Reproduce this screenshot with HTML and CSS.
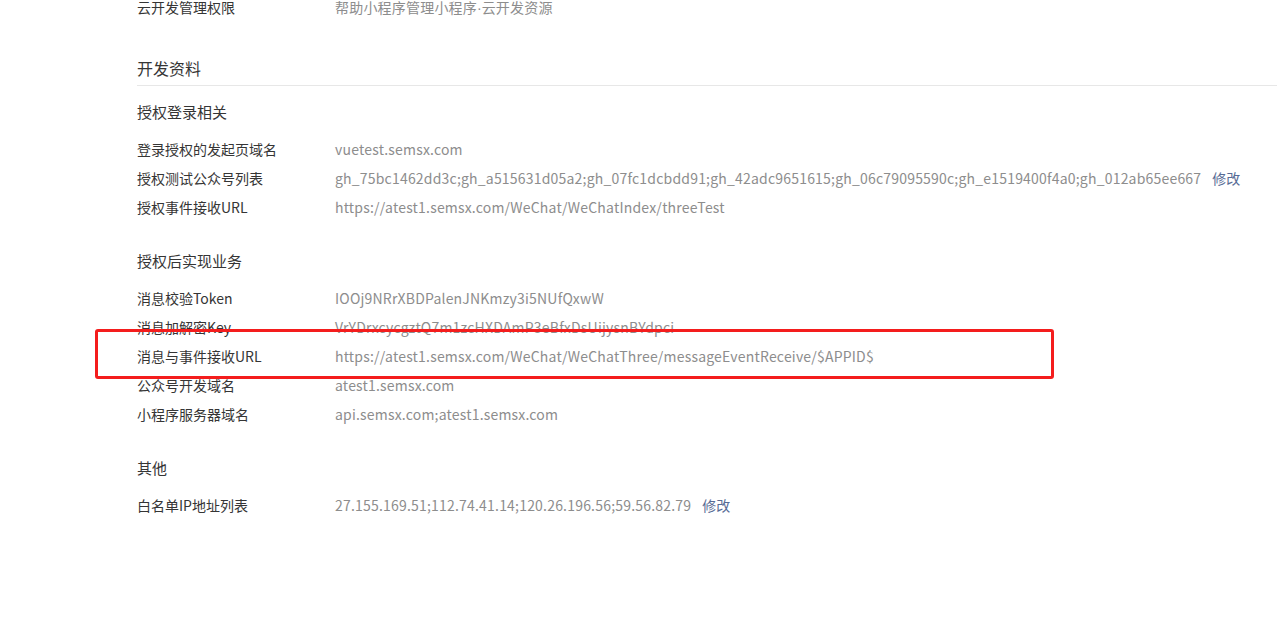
FILE: index.html
```html
<!DOCTYPE html>
<html lang="zh-CN">
<head>
<meta charset="utf-8">
<title>开发资料</title>
<link rel="stylesheet" href="styles.css">
</head>
<body>
<div class="page">
  <div class="row first"><span class="label">云开发管理权限</span><span class="value">帮助小程序管理小程序<span class="dot">·</span>云开发资源</span></div>

  <h2 class="section-title">开发资料</h2>

  <h3 class="sub-title">授权登录相关</h3>
  <div class="row"><span class="label">登录授权的发起页域名</span><span class="value">vuetest.semsx.com</span></div>
  <div class="row"><span class="label">授权测试公众号列表</span><span class="value">gh_75bc1462dd3c;gh_a515631d05a2;gh_07fc1dcbdd91;gh_42adc9651615;gh_06c79095590c;gh_e1519400f4a0;gh_012ab65ee667</span><a class="link">修改</a></div>
  <div class="row"><span class="label">授权事件接收URL</span><span class="value">https://atest1.semsx.com/WeChat/WeChatIndex/threeTest</span></div>

  <h3 class="sub-title">授权后实现业务</h3>
  <div class="row"><span class="label">消息校验Token</span><span class="value">IOOj9NRrXBDPalenJNKmzy3i5NUfQxwW</span></div>
  <div class="row"><span class="label">消息加解密Key</span><span class="value">VrYDrxcycgztQ7m1zcHXDAmP3eBfxDsUijysnBYdpci</span></div>
  <div class="row"><span class="label">消息与事件接收URL</span><span class="value">https://atest1.semsx.com/WeChat/WeChatThree/messageEventReceive/$APPID$</span></div>
  <div class="row"><span class="label">公众号开发域名</span><span class="value">atest1.semsx.com</span></div>
  <div class="row"><span class="label">小程序服务器域名</span><span class="value">api.semsx.com;atest1.semsx.com</span></div>

  <h3 class="sub-title">其他</h3>
  <div class="row"><span class="label">白名单IP地址列表</span><span class="value">27.155.169.51;112.74.41.14;120.26.196.56;59.56.82.79</span><a class="link">修改</a></div>

  <div class="highlight"></div>
</div>
</body>
</html>
```

FILE: styles.css
```css
* { box-sizing: border-box; }
html, body {
  margin: 0;
  padding: 0;
  background: #fff;
  overflow: hidden;
}
body {
  font-family: "Noto Sans CJK SC", "Liberation Sans", sans-serif;
  font-size: 14px;
  color: #353535;
}
.page {
  position: relative;
  padding-left: 137px;
  margin-top: -7px;
}
.row {
  display: flex;
  align-items: center;
  height: 29px;
  line-height: 29px;
  white-space: nowrap;
}
.label {
  width: 198px;
  flex: none;
  color: #353535;
}
.value {
  color: #8d8d8d;
  letter-spacing: 0.2px;
}
.dot {
  font-family: "Liberation Sans", sans-serif;
  letter-spacing: 0;
}
.link {
  color: #576b95;
  margin-left: 11px;
  cursor: pointer;
}
.section-title {
  margin: 34px 0 0;
  font-size: 16px;
  font-weight: normal;
  line-height: 24px;
  padding-bottom: 5px;
  border-bottom: 1px solid #e7e7e7;
  color: #353535;
}
.sub-title {
  margin: 14px 0 11px;
  font-size: 15px;
  font-weight: normal;
  line-height: 24px;
  color: #353535;
}
.row + .sub-title {
  margin-top: 27px;
}
.highlight {
  position: absolute;
  left: 95px;
  top: 336px;
  width: 959px;
  height: 50px;
  border: 3px solid #f41d1d;
  border-radius: 3px;
  pointer-events: none;
}
```
